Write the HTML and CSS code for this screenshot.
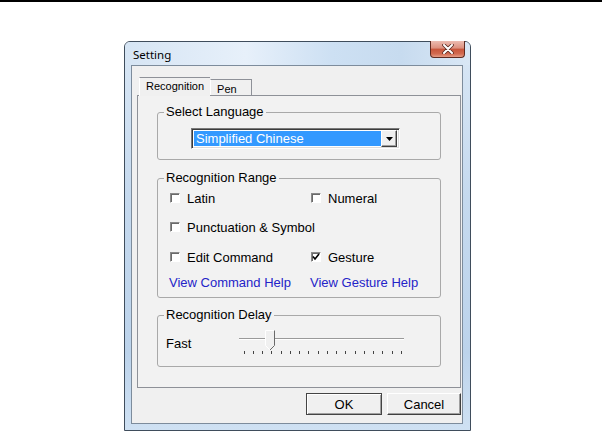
FILE: index.html
```html
<!DOCTYPE html>
<html lang="en">
<head>
  <meta charset="UTF-8">
  <title>Setting</title>
  <link rel="stylesheet" href="styles.css">
</head>
<body>
  <div class="topline"></div>

  <!-- Dialog window -->
  <div class="window">
    <div class="titlebar">
      <span class="title">Setting</span>
      <button class="close">
        <svg width="12" height="10" viewBox="0 0 12 10">
          <path d="M2 1 L10 9 M10 1 L2 9" stroke="#5a2a22" stroke-width="3.6" stroke-linecap="round"/>
          <path d="M2 1 L10 9 M10 1 L2 9" stroke="#fff" stroke-width="2" stroke-linecap="round"/>
        </svg>
      </button>
    </div>

    <div class="client">
      <div class="tabs">
        <div class="tab active">Recognition</div>
        <div class="tab pen">Pen</div>
      </div>

      <div class="panel">
        <fieldset class="group lang">
          <legend>Select Language</legend>
          <div class="combo">
            <div class="combo-text">Simplified Chinese</div>
            <div class="combo-btn">
              <svg width="7" height="4" viewBox="0 0 7 4"><path d="M0 0 H7 L3.5 4 Z" fill="#000"/></svg>
            </div>
          </div>
        </fieldset>

        <fieldset class="group range">
          <legend>Recognition Range</legend>
          <div class="options">
            <label class="opt"><span class="check"></span>Latin</label>
            <label class="opt"><span class="check"></span>Numeral</label>
            <label class="opt wide"><span class="check"></span>Punctuation &amp; Symbol</label>
            <label class="opt"><span class="check"></span>Edit Command</label>
            <label class="opt"><span class="check">
              <svg width="8" height="8" viewBox="0 0 8 8"><path d="M1 3.5 L3 6 L7 1" fill="none" stroke="#000" stroke-width="1.6"/></svg>
            </span>Gesture</label>
            <a class="link">View Command Help</a>
            <a class="link">View Gesture Help</a>
          </div>
        </fieldset>

        <fieldset class="group delay">
          <legend>Recognition Delay</legend>
          <div class="delay-row">
            <span class="fast">Fast</span>
            <svg class="slider" width="170" height="30" viewBox="0 0 170 30">
              <line x1="2" y1="10.5" x2="167" y2="10.5" stroke="#9a9a9a"/>
              <line x1="2" y1="11.5" x2="167" y2="11.5" stroke="#fff"/>
              <g stroke="#444" stroke-width="1">
                <line x1="7.5" y1="23" x2="7.5" y2="26"/>
                <line x1="16.5" y1="23" x2="16.5" y2="26"/>
                <line x1="25.5" y1="23" x2="25.5" y2="26"/>
                <line x1="34.5" y1="23" x2="34.5" y2="26"/>
                <line x1="44.5" y1="23" x2="44.5" y2="26"/>
                <line x1="53.5" y1="23" x2="53.5" y2="26"/>
                <line x1="62.5" y1="23" x2="62.5" y2="26"/>
                <line x1="71.5" y1="23" x2="71.5" y2="26"/>
                <line x1="81.5" y1="23" x2="81.5" y2="26"/>
                <line x1="90.5" y1="23" x2="90.5" y2="26"/>
                <line x1="99.5" y1="23" x2="99.5" y2="26"/>
                <line x1="108.5" y1="23" x2="108.5" y2="26"/>
                <line x1="118.5" y1="23" x2="118.5" y2="26"/>
                <line x1="127.5" y1="23" x2="127.5" y2="26"/>
                <line x1="136.5" y1="23" x2="136.5" y2="26"/>
                <line x1="145.5" y1="23" x2="145.5" y2="26"/>
                <line x1="155.5" y1="23" x2="155.5" y2="26"/>
                <line x1="164.5" y1="23" x2="164.5" y2="26"/>
              </g>
              <path d="M28.5 2.5 H37.5 V17.5 L33 22 L28.5 17.5 Z" fill="#f0f0f0" stroke="#fff"/>
              <path d="M37.5 2.5 V17.5 L33 22" fill="none" stroke="#6a6a6a"/>
            </svg>
          </div>
        </fieldset>
      </div>

      <div class="buttons">
        <button class="btn default">OK</button>
        <button class="btn">Cancel</button>
      </div>
    </div>
  </div>
</body>
</html>
```

FILE: styles.css
```css
* {
  box-sizing: border-box;
}

body {
  margin: 0;
  background: #fff;
  font-family: "Liberation Sans", Arial, sans-serif;
  font-size: 13px;
  color: #000;
}

.topline {
  height: 2px;
  background: #000;
}

/* window frame (aero glass look) */
.window {
  margin: 39px 0 0 124px;
  width: 347px;
  height: 390px;
  border: 1px solid #3f4d5c;
  border-radius: 6px 6px 0 0;
  padding: 0 7px 6px 6px;
  background: linear-gradient(180deg, #d9e7f5 0%, #c5d9ee 40%, #bcd3eb 80%, #cfe1f3 100%);
  display: flex;
  flex-direction: column;
}

.titlebar {
  height: 23px;
  display: flex;
  justify-content: space-between;
  align-items: flex-start;
  background: linear-gradient(90deg, #d6e5f4 0%, #e7f0fa 35%, #cde0f3 60%, #c7dbef 80%, #d9e7f5 100%);
  margin: 0 -7px 0 -6px;
  padding: 0 5px 0 8px;
  border-radius: 5px 5px 0 0;
}

.title {
  font-family: "Noto Sans", "Liberation Sans", sans-serif;
  font-size: 11.5px;
  line-height: 25px;
}

.close {
  width: 35px;
  height: 17px;
  margin-top: -1px;
  padding: 0;
  border: 1px solid #5e2a20;
  border-top: none;
  border-radius: 0 0 4px 4px;
  background: linear-gradient(180deg, #ecbcb1 0%, #dc8f7d 45%, #c8553b 50%, #d26a50 80%, #e59c86 100%);
  display: flex;
  align-items: center;
  justify-content: center;
}

.client {
  height: 359px;
  background: #f0f0f0;
  border: 1px solid #7d8c9c;
  padding: 11px 0 0 5px;
}

/* tab strip */
.tabs {
  display: flex;
  align-items: flex-end;
  height: 18px;
  margin-left: 2px;
  position: relative;
  z-index: 1;
  font-size: 11px;
}

.tab {
  height: 16px;
  line-height: 18px;
  padding: 0 5px 0 6px;
  border: 1px solid #8e9198;
  border-bottom: none;
  border-left-color: #fff;
  background: #f0f0f0;
}

.tab.pen {
  width: 42px;
}

.tab.active {
  height: 19px;
  margin-bottom: -1px;
  line-height: 16px;
  padding: 0 6px 0 6px;
  border-right: none;
}

.panel {
  height: 293px;
  margin-right: 1px;
  border: 1px solid #8e9198;
  background: #f2f2f2;
  padding: 8px 19px 0 19px;
}

/* group boxes */
.group {
  margin: 0;
  padding: 0 8px;
  min-width: 0;
  border: 1px solid #a9a9a9;
  border-radius: 3px;
}

.group legend {
  padding: 0 2px;
  margin-left: -2px;
  line-height: 16px;
}

.range {
  margin-top: 10px;
}

.delay {
  margin-top: 9px;
}

.combo {
  display: flex;
  width: 209px;
  height: 21px;
  margin: 8px 0 10px 25px;
  border: 1px solid;
  border-color: #7a7a7a #fff #fff #7a7a7a;
  box-shadow: inset 1px 1px 0 #3c3c3c, inset -1px -1px 0 #dcdcdc;
  background: #fff;
  padding: 2px;
}

.combo-text {
  flex: 1;
  background: #3399ff;
  color: #fff;
  line-height: 15px;
  padding-left: 2px;
}

.combo-btn {
  width: 16px;
  margin-top: -1px;
  margin-bottom: -1px;
  background: #f0f0f0;
  border: 1px solid;
  border-color: #fff #404040 #404040 #fff;
  box-shadow: inset -1px -1px 0 #a0a0a0;
  display: flex;
  align-items: center;
  justify-content: center;
}

.options {
  display: grid;
  grid-template-columns: 141px auto;
  grid-template-rows: 24px 34px 26px 24px;
  align-items: center;
  padding: 0 0 3px 4px;
}

.opt {
  display: flex;
  align-items: center;
  gap: 7px;
}

.opt.wide {
  grid-column: span 2;
}

.check {
  width: 10px;
  height: 10px;
  border: 1px solid;
  border-color: #8a8a8a #fff #fff #8a8a8a;
  box-shadow: inset 1px 1px 0 #6a6a6a;
  background: #fff;
  display: flex;
  align-items: center;
  justify-content: center;
}

.link {
  color: #2424c8;
  margin-left: -1px;
}

.delay-row {
  display: flex;
  align-items: center;
  height: 40px;
  margin-bottom: 3px;
}

.fast {
  width: 71px;
}

.buttons {
  display: flex;
  justify-content: flex-end;
  gap: 5px;
  margin-top: 5px;
  padding-right: 1px;
}

.btn {
  width: 76px;
  height: 22px;
  padding: 0;
  font-family: "Liberation Sans", Arial, sans-serif;
  font-size: 13px;
  color: #000;
  background: #f0f0f0;
  border: 1px solid;
  border-color: #fff #404040 #404040 #fff;
  box-shadow: inset -1px -1px 0 #a0a0a0;
}

.btn.default {
  border-color: #444;
  box-shadow: inset 1px 1px 0 #fff, inset -1px -1px 0 #a0a0a0;
}

.btn + .btn {
  width: 74px;
}
```
